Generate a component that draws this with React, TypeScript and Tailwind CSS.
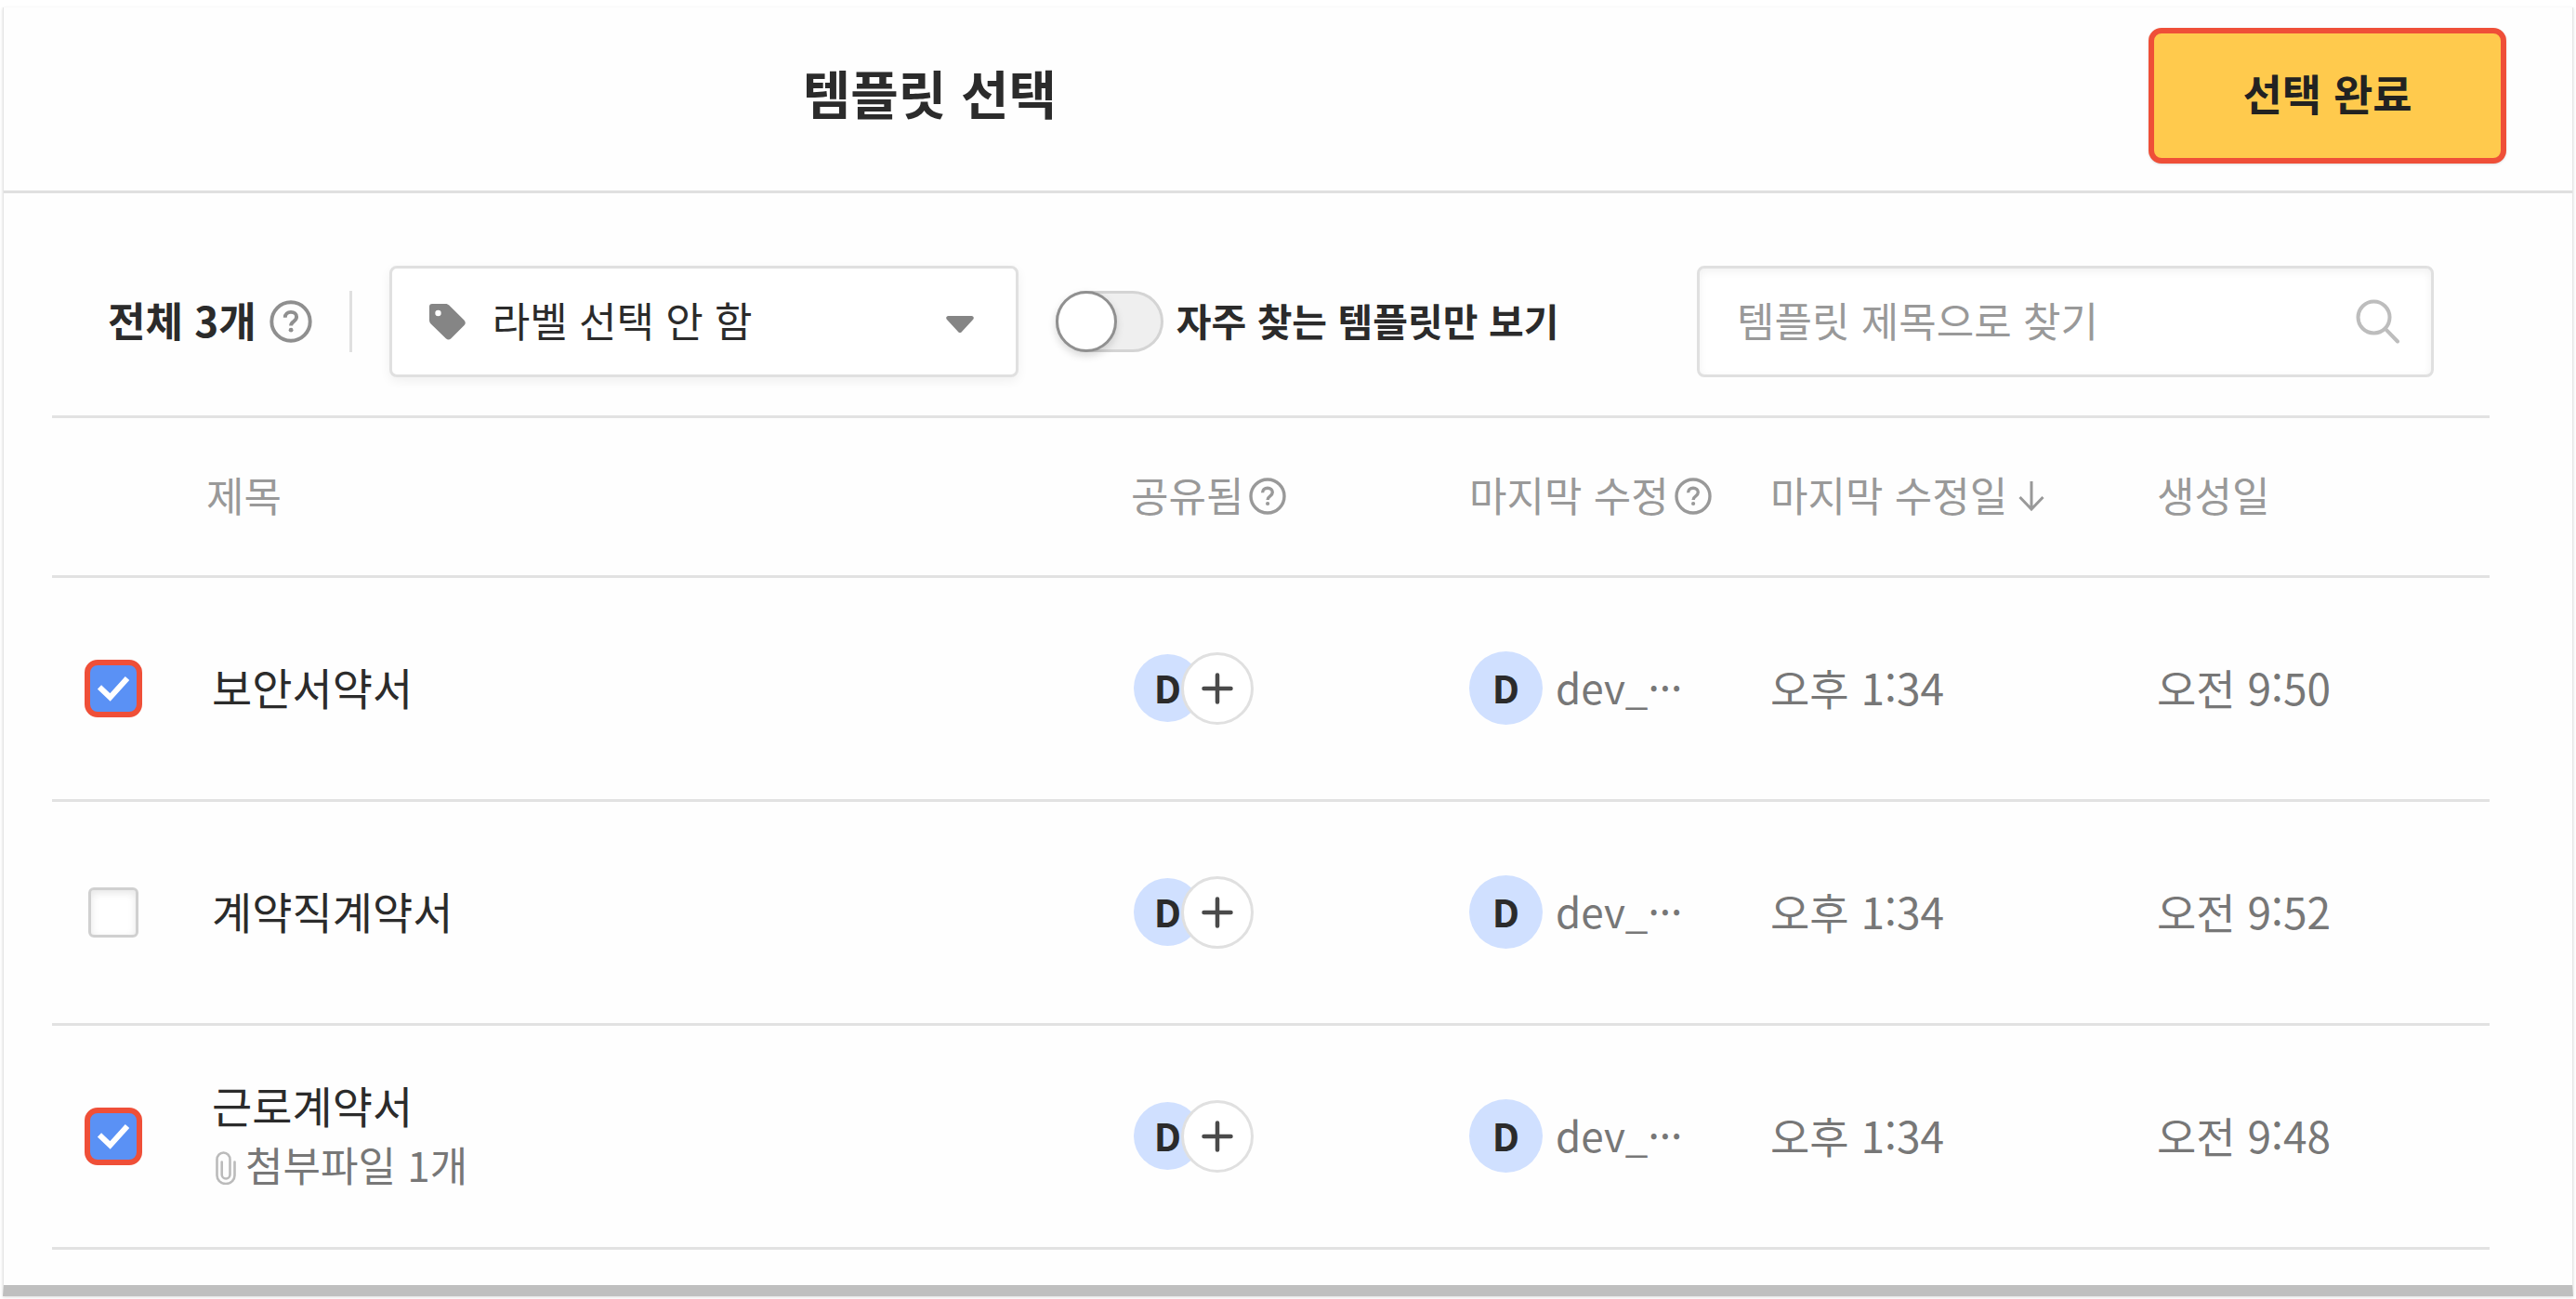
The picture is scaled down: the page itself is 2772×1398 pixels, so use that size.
import { useState } from "react";
import clsx from "clsx";

// ─── Types & data ─────────────────────────────────────────────────────────────

interface Template {
  id: number;
  title: string;
  attachments?: string;
  owner: string;
  modifiedAt: string;
  createdAt: string;
}

const TEMPLATES: Template[] = [
  { id: 1, title: "보안서약서", owner: "dev_···", modifiedAt: "오후 1:34", createdAt: "오전 9:50" },
  { id: 2, title: "계약직계약서", owner: "dev_···", modifiedAt: "오후 1:34", createdAt: "오전 9:52" },
  {
    id: 3,
    title: "근로계약서",
    attachments: "첨부파일 1개",
    owner: "dev_···",
    modifiedAt: "오후 1:34",
    createdAt: "오전 9:48",
  },
];

// ─── Icons ────────────────────────────────────────────────────────────────────

function HelpIcon({ className }: { className?: string }) {
  return (
    <svg viewBox="0 0 40 40" fill="none" stroke="currentColor" className={clsx("shrink-0", className)} aria-hidden="true">
      <circle cx="20" cy="20" r="18" strokeWidth="3.4" />
      <path d="M14.6 16.2c0-3.2 2.3-5 5.4-5s5.3 1.8 5.3 4.5c0 2.1-1.2 3.2-2.8 4.4-1.6 1.1-2.4 1.9-2.4 3.9" strokeWidth="3.4" />
      <circle cx="20.1" cy="28" r="2.1" fill="currentColor" stroke="none" />
    </svg>
  );
}

function TagIcon({ className }: { className?: string }) {
  return (
    <svg viewBox="0 0 40 40" fill="currentColor" className={className} aria-hidden="true">
      <path
        fillRule="evenodd"
        d="M4 1h14.500c1.500 0 2.800.6 3.800 1.600L38.400 18.600a4 4 0 0 1 0 5.600L24.400 38.200a4 4 0 0 1-5.600 0L2.600 22.400A5 5 0 0 1 1 18.600V4a3 3 0 0 1 3-3Zm6.500 6.800a3.200 3.200 0 1 0 0 6.400 3.200 3.200 0 0 0 0-6.400Z"
      />
    </svg>
  );
}

function CaretIcon({ className }: { className?: string }) {
  return (
    <svg viewBox="0 0 30 18" fill="currentColor" className={className} aria-hidden="true">
      <path d="M2.500 0h25c2 0 3 2.200 1.700 3.700L17 17a2.700 2.700 0 0 1-4 0L.8 3.700C-.5 2.200.5 0 2.500 0Z" />
    </svg>
  );
}

function SearchIcon({ className }: { className?: string }) {
  return (
    <svg viewBox="0 0 48 48" fill="none" stroke="currentColor" strokeWidth="4" strokeLinecap="round" className={className} aria-hidden="true">
      <circle cx="19.500" cy="19.500" r="17" />
      <path d="M31.800 31.800 45 45.500" />
    </svg>
  );
}

function SortDownIcon({ className }: { className?: string }) {
  return (
    <svg viewBox="0 0 28 32" fill="none" stroke="currentColor" strokeWidth="3" className={className} aria-hidden="true">
      <path d="M14 0v30M1.500 17 14 30l12.500-13" />
    </svg>
  );
}

function ClipIcon({ className }: { className?: string }) {
  return (
    <svg viewBox="0 0 22 36" fill="none" stroke="currentColor" strokeWidth="2.600" strokeLinecap="round" className={className} aria-hidden="true">
      <path d="M20.500 11.500v14.500a9.500 9 0 0 1-19 0V9a7 7.500 0 0 1 14 0v16a4.400 4.500 0 0 1-8.800 0V11.500" />
    </svg>
  );
}

function PlusIcon({ className }: { className?: string }) {
  return (
    <svg viewBox="0 0 34 34" fill="none" stroke="currentColor" strokeWidth="4.500" strokeLinecap="round" className={className} aria-hidden="true">
      <path d="M17 2.500v29M2.500 17h29" />
    </svg>
  );
}

// ─── Row checkbox ─────────────────────────────────────────────────────────────

interface RowCheckboxProps {
  label: string;
  checked: boolean;
  onChange: () => void;
}

function RowCheckbox({ label, checked, onChange }: RowCheckboxProps) {
  return (
    <span className="relative flex size-[62px] items-center justify-center">
      <input
        type="checkbox"
        aria-label={label}
        checked={checked}
        onChange={onChange}
        className={clsx(
          "appearance-none",
          checked
            ? "size-[62px] rounded-[14px] border-[6px] border-[#ef4f38] bg-[#5a91f5]"
            : "size-[54px] rounded-[6px] border-[3px] border-[#d0d0d0] bg-white shadow-[inset_0_3px_8px_rgba(0,0,0,0.1)]",
        )}
      />
      {checked && (
        <svg
          viewBox="0 0 34 28"
          fill="none"
          stroke="white"
          strokeWidth="6"
          className="pointer-events-none absolute h-[28px] w-[34px]"
          aria-hidden="true"
        >
          <path d="M2 12.500 13.500 23.500 32 3" />
        </svg>
      )}
    </span>
  );
}

// ─── Page ─────────────────────────────────────────────────────────────────────

export default function App() {
  const [selected, setSelected] = useState<number[]>([1, 3]);
  const [favoritesOnly, setFavoritesOnly] = useState(false);
  const [query, setQuery] = useState("");

  function toggle(id: number) {
    setSelected((prev) => (prev.includes(id) ? prev.filter((v) => v !== id) : [...prev, id]));
  }

  return (
    <div
      lang="ko"
      className="bg-white px-[3px] pt-2 pb-1 font-['Noto_Sans_CJK_KR',sans-serif] text-[#2b2b2b]"
    >
      <div className="border-x border-b-[12px] border-x-[#e6e6e6] border-b-[#bfbfbf] bg-[#fefefe] shadow-[0_1px_3px_rgba(0,0,0,0.15)]">
        {/* ── Header ── */}
        <header className="flex h-[200px] items-center justify-between border-b-[3px] border-[#e0e0e0] pr-[71px] pb-2">
          <h1 className="w-[74%] pb-2 text-center text-[56px] leading-[80px] font-bold">템플릿 선택</h1>
          <button
            type="button"
            className="h-[146px] w-[385px] rounded-[14px] border-[6px] border-[#ef4f38] bg-[#ffca4d] pb-2 text-[46px] leading-[64px] font-bold text-[#222] shadow-sm"
          >
            선택 완료
          </button>
        </header>

        <main className="pr-[89px] pb-[38px] pl-[52px]">
          {/* ── Toolbar ── */}
          <div className="flex h-[242px] items-center border-b-[3px] border-[#e2e2e2] pt-9 pr-[60px] pl-[60px]">
            <span className="pb-1 text-[44px] leading-[64px] font-bold">전체 3개</span>
            <HelpIcon className="ml-[14px] size-[46px] text-[#8f8f8f]" />
            <span className="ml-10 h-[66px] w-[3px] bg-[#e0e0e0]" />

            <div className="relative ml-10 w-[677px]">
              <select
                aria-label="라벨"
                className="h-[120px] w-full appearance-none rounded-[8px] border-[3px] border-[#e0e0e0] bg-white pb-1 pl-[108px] text-[44px] leading-[64px] shadow-[0_4px_12px_rgba(0,0,0,0.06)]"
              >
                <option>라벨 선택 안 함</option>
              </select>
              <TagIcon className="pointer-events-none absolute top-10 left-[42px] size-10 text-[#858585]" />
              <CaretIcon className="pointer-events-none absolute top-[54px] right-12 h-[18px] w-[30px] text-[#858585]" />
            </div>

            <label className="ml-10 flex items-center gap-[14px] text-[41px] leading-[64px] font-bold">
              <input
                type="checkbox"
                role="switch"
                checked={favoritesOnly}
                onChange={(e) => setFavoritesOnly(e.target.checked)}
                className="flex h-[66px] w-[116px] shrink-0 appearance-none items-center rounded-full bg-[#efefef] inset-ring-3 inset-ring-[#d4d4d4] before:size-[66px] before:rounded-full before:border-[3px] before:border-[#909090] before:bg-white before:shadow-[0_4px_8px_rgba(0,0,0,0.15)] before:content-[''] checked:justify-end checked:bg-[#5a91f5]"
              />
              <span className="pb-1">자주 찾는 템플릿만 보기</span>
            </label>

            <div className="relative ml-auto w-[793px]">
              <input
                type="text"
                aria-label="템플릿 제목으로 찾기"
                placeholder="템플릿 제목으로 찾기"
                value={query}
                onChange={(e) => setQuery(e.target.value)}
                className="h-[120px] w-full rounded-[8px] border-[3px] border-[#e0e0e0] bg-white pr-[100px] pb-1 pl-10 text-[44px] leading-[64px] shadow-[inset_0_3px_10px_rgba(0,0,0,0.06)] placeholder:text-[#999]"
              />
              <SearchIcon className="pointer-events-none absolute top-9 right-9 size-12 text-[#bdbdbd]" />
            </div>
          </div>

          {/* ── Template list ── */}
          <table className="w-full table-fixed text-left text-[44px] leading-[64px]">
            <thead>
              <tr className="h-[170px] border-b-[3px] border-[#e2e2e2] text-[#999]">
                <th className="w-[166px]" aria-label="선택" />
                <th className="pb-1 font-normal">제목</th>
                <th className="w-[364px] font-normal">
                  <span className="flex items-center gap-[6px]">
                    <span className="pb-1">공유됨</span>
                    <HelpIcon className="size-10" />
                  </span>
                </th>
                <th className="w-[324px] font-normal">
                  <span className="flex items-center gap-[6px]">
                    <span className="pb-1">마지막 수정</span>
                    <HelpIcon className="size-10" />
                  </span>
                </th>
                <th className="w-[416px] font-normal">
                  <span className="flex items-center gap-3">
                    <span className="pb-1">마지막 수정일</span>
                    <SortDownIcon className="h-8 w-7" />
                  </span>
                </th>
                <th className="w-[358px] pb-1 font-normal">생성일</th>
              </tr>
            </thead>
            <tbody>
              {TEMPLATES.map((t) => (
                <tr key={t.id} className="h-[241px] border-b-[3px] border-[#e2e2e2] text-[#777]">
                  <td className="pl-[35px]">
                    <RowCheckbox label={t.title} checked={selected.includes(t.id)} onChange={() => toggle(t.id)} />
                  </td>
                  <td className="pb-1 pl-[6px]">
                    <p className="text-[47px] text-[#2b2b2b]">{t.title}</p>
                    {t.attachments && (
                      <p className="flex items-center gap-[10px]">
                        <ClipIcon className="mt-2 ml-1 h-9 w-[22px] text-[#bbb]" />
                        {t.attachments}
                      </p>
                    )}
                  </td>
                  <td>
                    <span className="flex items-center">
                      <span className="ml-[3px] flex size-[73px] items-center justify-center rounded-full bg-[#d0e0ff] pb-1 text-[41px] font-bold text-[#2b2b2b]">
                        D
                      </span>
                      <button
                        type="button"
                        aria-label="공유 추가"
                        className="z-10 -ml-[22px] flex size-[78px] items-center justify-center rounded-full border-[3px] border-[#e0e0e0] bg-white text-[#4a4a4a]"
                      >
                        <PlusIcon className="size-[34px]" />
                      </button>
                    </span>
                  </td>
                  <td>
                    <span className="flex items-center gap-[14px]">
                      <span className="flex size-[79px] items-center justify-center rounded-full bg-[#d0e0ff] pb-1 text-[41px] font-bold text-[#2b2b2b]">
                        D
                      </span>
                      <span className="pb-1">{t.owner}</span>
                    </span>
                  </td>
                  <td className="pb-1 text-[46px]">{t.modifiedAt}</td>
                  <td className="pb-1 text-[46px]">{t.createdAt}</td>
                </tr>
              ))}
            </tbody>
          </table>
        </main>
      </div>
    </div>
  );
}
